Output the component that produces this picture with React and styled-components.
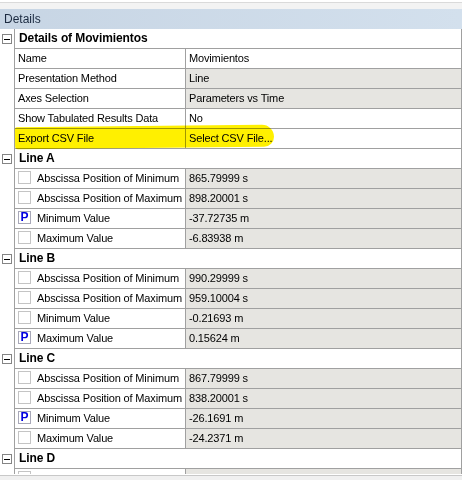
import React from 'react'
import styled, { createGlobalStyle } from 'styled-components'

const groups = [
	{
		title: 'Details of Movimientos',
		rows: [
			{ name: 'Name', value: 'Movimientos' },
			{ name: 'Presentation Method', value: 'Line', readOnly: true },
			{ name: 'Axes Selection', value: 'Parameters vs Time', readOnly: true },
			{ name: 'Show Tabulated Results Data', value: 'No' },
			{ name: 'Export CSV File', value: 'Select CSV File...' },
		],
	},
	{
		title: 'Line A',
		rows: [
			{ check: 'box', name: 'Abscissa Position of Minimum', value: '865.79999 s', readOnly: true },
			{ check: 'box', name: 'Abscissa Position of Maximum', value: '898.20001 s', readOnly: true },
			{ check: 'P', name: 'Minimum Value', value: '-37.72735 m', readOnly: true },
			{ check: 'box', name: 'Maximum Value', value: '-6.83938 m', readOnly: true },
		],
	},
	{
		title: 'Line B',
		rows: [
			{ check: 'box', name: 'Abscissa Position of Minimum', value: '990.29999 s', readOnly: true },
			{ check: 'box', name: 'Abscissa Position of Maximum', value: '959.10004 s', readOnly: true },
			{ check: 'box', name: 'Minimum Value', value: '-0.21693 m', readOnly: true },
			{ check: 'P', name: 'Maximum Value', value: '0.15624 m', readOnly: true },
		],
	},
	{
		title: 'Line C',
		rows: [
			{ check: 'box', name: 'Abscissa Position of Minimum', value: '867.79999 s', readOnly: true },
			{ check: 'box', name: 'Abscissa Position of Maximum', value: '838.20001 s', readOnly: true },
			{ check: 'P', name: 'Minimum Value', value: '-26.1691 m', readOnly: true },
			{ check: 'box', name: 'Maximum Value', value: '-24.2371 m', readOnly: true },
		],
	},
	{
		title: 'Line D',
		// only the top of the first row shows above the scroll edge
		rows: [{ check: 'box', name: '', value: '', readOnly: true }],
	},
]

const App = () => {
	return (
		<>
			<GlobalStyle />
			<Window>
				<TopEdge />
				<TitleBar>Details</TitleBar>
				<Grid>
					{groups.map((group) => (
						<div key={group.title}>
							<GroupRow>
								<Gutter>
									<Toggle />
								</Gutter>
								<GroupCell>{group.title}</GroupCell>
							</GroupRow>
							{group.rows.map((row, i) => (
								<Row key={i}>
									<Gutter />
									<NameCell>
										{row.check === 'box' && <Check />}
										{row.check === 'P' && <Check $p>P</Check>}
										<span>{row.name}</span>
									</NameCell>
									<ValueCell $readOnly={row.readOnly}>{row.value}</ValueCell>
								</Row>
							))}
						</div>
					))}
					<Highlight />
				</Grid>
				<ScrollEdge />
			</Window>
		</>
	)
}

const GlobalStyle = createGlobalStyle`
	body {
		margin: 0;
		background: #fff;
		font-family: 'Liberation Sans', Arial, sans-serif;
	}
`

const Window = styled.div`
	width: 462px;
	height: 480px;
	overflow: hidden;
	background: #fff;
	display: flex;
	flex-direction: column;
`

const TopEdge = styled.div`
	height: 9px;
	box-sizing: border-box;
	border-top: 2px solid #fff;
	background: linear-gradient(#dadada 0 1px, #f3f3f3 1px);
`

const TitleBar = styled.div`
	height: 20px;
	line-height: 20px;
	padding-left: 4px;
	font-size: 12px;
	color: #1b2a40;
	background: linear-gradient(to right, #c7d5e4, #d3e0ed);
`

const Grid = styled.div`
	position: relative;
	height: 445px;
	overflow: hidden;
	font-size: 11px;
	letter-spacing: -0.15px;
	color: #000;
`

const Row = styled.div`
	display: grid;
	grid-template-columns: 14px 171px 277px;
	height: 20px;
`

const GroupRow = styled.div`
	display: grid;
	grid-template-columns: 14px 448px;
	height: 20px;
`

const Gutter = styled.div`
	display: flex;
	align-items: center;
	padding-left: 2px;
	background: #fff;
`

const Toggle = styled.span`
	position: relative;
	width: 10px;
	height: 10px;
	box-sizing: border-box;
	border: 1px solid #848484;
	background: #fff;

	&::after {
		content: '';
		position: absolute;
		left: 1px;
		right: 1px;
		top: 3.5px;
		height: 1px;
		background: #000;
	}
`

const GroupCell = styled.div`
	box-sizing: border-box;
	border-left: 1px solid #a0a0a0;
	border-right: 1px solid #a0a0a0;
	border-bottom: 1px solid #a0a0a0;
	padding-left: 4px;
	line-height: 19px;
	font-weight: bold;
	font-size: 12px;
	letter-spacing: -0.1px;
	background: #fff;
`

const NameCell = styled.div`
	display: flex;
	align-items: flex-start;
	gap: 6px;
	box-sizing: border-box;
	border-left: 1px solid #a0a0a0;
	border-bottom: 1px solid #a0a0a0;
	padding-left: 3px;
	line-height: 19px;
	white-space: nowrap;
	overflow: hidden;
	background: #fff;
`

const Check = styled.span`
	flex: none;
	width: 13px;
	height: 13px;
	margin-top: 2px;
	box-sizing: border-box;
	border: 1px solid ${({ $p }) => ($p ? '#a8a8b8' : '#c4c4c4')};
	background: #fff;
	color: #0000e0;
	font-weight: bold;
	font-size: 12px;
	letter-spacing: 0;
	line-height: 11px;
	text-align: center;
`

const ValueCell = styled.div`
	box-sizing: border-box;
	border-left: 1px solid #a0a0a0;
	border-right: 1px solid #a0a0a0;
	border-bottom: 1px solid #a0a0a0;
	padding-left: 3px;
	line-height: 19px;
	white-space: nowrap;
	overflow: hidden;
	background: ${({ $readOnly }) => ($readOnly ? '#e6e5e1' : '#fff')};
`

const Highlight = styled.span`
	position: absolute;
	left: 15px;
	top: 97px;
	width: 259px;
	height: 22px;
	background: #fff000;
	mix-blend-mode: multiply;
	border-radius: 2px 12px 10px 3px;
	transform: rotate(-0.6deg);
	pointer-events: none;
`

const ScrollEdge = styled.div`
	flex: 1;
	border-top: 1px solid #fff;
	background: linear-gradient(#c8c8c8 0 1px, #f0f0f0 1px);
`

export default App
